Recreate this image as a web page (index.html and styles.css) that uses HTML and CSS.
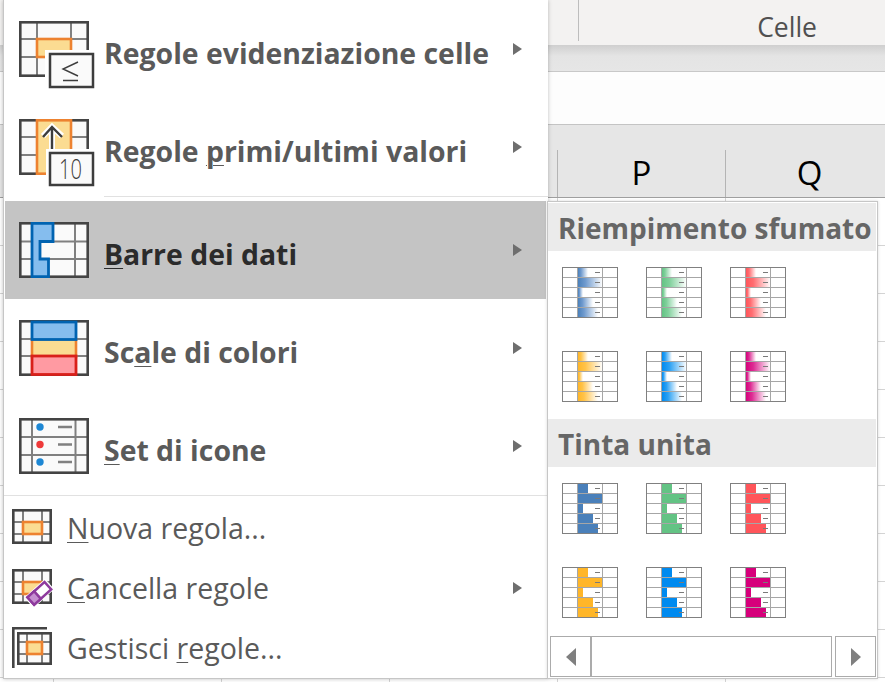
FILE: index.html
```html
<!DOCTYPE html>
<html lang="it">
<head>
<meta charset="utf-8">
<title>Formattazione condizionale</title>
<link rel="stylesheet" href="styles.css">
</head>
<body>
<svg class="defs" width="0" height="0" aria-hidden="true">
  <defs>
    <linearGradient id="g1"><stop offset="0" stop-color="#4a80ba"/><stop offset="0.3" stop-color="#6f9ace"/><stop offset="1" stop-color="#fff"/></linearGradient>
    <linearGradient id="g2"><stop offset="0" stop-color="#63c384"/><stop offset="0.3" stop-color="#7fd09b"/><stop offset="1" stop-color="#fff"/></linearGradient>
    <linearGradient id="g3"><stop offset="0" stop-color="#ff555a"/><stop offset="0.3" stop-color="#ff6d71"/><stop offset="1" stop-color="#fff"/></linearGradient>
    <linearGradient id="g4"><stop offset="0" stop-color="#ffb628"/><stop offset="0.3" stop-color="#ffc349"/><stop offset="1" stop-color="#fff"/></linearGradient>
    <linearGradient id="g5"><stop offset="0" stop-color="#008aef"/><stop offset="0.3" stop-color="#2aa0f3"/><stop offset="1" stop-color="#fff"/></linearGradient>
    <linearGradient id="g6"><stop offset="0" stop-color="#d6007b"/><stop offset="0.3" stop-color="#dc2c93"/><stop offset="1" stop-color="#fff"/></linearGradient>
    <symbol id="bars" viewBox="0 0 56 51">
      <rect x="16" y="1" width="10" height="9"/>
      <rect x="16" y="11" width="24.5" height="9"/>
      <rect x="16" y="21" width="5" height="9"/>
      <rect x="16" y="31" width="15" height="9"/>
      <rect x="16" y="41" width="20" height="9"/>
    </symbol>
    <symbol id="tile-grid" viewBox="0 0 56 51">
      <path d="M15.5 1V50M40.5 1V50M1 10.5H55M1 20.5H55M1 30.5H55M1 40.5H55" stroke="#a6a6a6" fill="none"/>
      <path d="M33 5.5H38M33 15.5H38M33 25.5H38M33 35.5H38M33 45.5H38" stroke="#7a7a7a" fill="none"/>
      <rect x="0.5" y="0.5" width="55" height="50" stroke="#808080" fill="none"/>
    </symbol>
  </defs>
</svg>

<header class="ribbon">
  <div class="ribbon-group"><span class="ribbon-label">Celle</span></div>
</header>
<div class="ribbon-shadow"></div>
<div class="formula-bar"></div>
<div class="col-head">
  <div class="col-spacer"></div>
  <div class="col col-p"><span>P</span></div>
  <div class="col col-q"><span>Q</span></div>
</div>
<div class="sheet"></div>

<nav class="menu">
  <div class="row">
    <svg class="icon" viewBox="0 0 76 68">
      <rect class="cell-bg" x="1" y="1" width="68" height="54"/>
      <path class="line-in" d="M18 1V55M52 1V55M1 18H69M1 36H69"/>
      <rect class="line-out" x="1.300" y="1.300" width="67.400" height="53.400"/>
      <rect class="hl-orange" x="18" y="18" width="34" height="18"/>
      <rect class="halo" x="26" y="29" width="50" height="39"/>
      <rect class="box" x="31" y="33" width="43" height="33"/>
      <path class="glyph" d="M59 41L44 48L59 55M44 59.500H59"/>
    </svg>
    <span class="label">Re<u>g</u>ole evidenziazione celle</span>
    <i class="chev"></i>
  </div>
  <div class="row">
    <svg class="icon" viewBox="0 0 76 68">
      <rect class="cell-bg" x="1" y="1" width="68" height="54"/>
      <path class="line-in" d="M1 18H69M1 36H69"/>
      <rect class="line-out" x="1.300" y="1.300" width="67.400" height="53.400"/>
      <rect class="hl-orange" x="18" y="1.300" width="34" height="53.400"/>
      <path class="arrow-halo" d="M33 9V34M24 17L33 8L43 17"/>
      <path class="arrow" d="M33 8V33M24 18L33 8L43 18"/>
      <rect class="halo" x="27" y="30" width="49" height="38"/>
      <rect class="box" x="31" y="34" width="43" height="32"/>
      <text class="icon-ten" x="40" y="60" textLength="23" lengthAdjust="spacingAndGlyphs">10</text>
    </svg>
    <span class="label">Regole <u>p</u>rimi/ultimi valori</span>
    <i class="chev"></i>
  </div>
  <div class="sep sep-inset"></div>
  <div class="row row-active">
    <svg class="icon" viewBox="0 0 76 68">
      <rect class="cell-bg" x="1" y="1" width="68" height="54"/>
      <path class="line-in" d="M56 1V55M1 19.500H69M1 37H69"/>
      <rect class="line-out" x="1.300" y="1.300" width="67.400" height="53.400"/>
      <path class="hl-blue" d="M13 1.300H34V19.500H21V37H29.500V54.700H13Z"/>
    </svg>
    <span class="label"><u>B</u>arre dei dati</span>
    <i class="chev"></i>
  </div>
  <div class="row">
    <svg class="icon" viewBox="0 0 76 68">
      <rect class="cell-bg" x="1" y="1" width="68" height="54"/>
      <path class="line-in" d="M1 19H69M1 36H69"/>
      <rect class="line-out" x="1.300" y="1.300" width="67.400" height="53.400"/>
      <rect class="hl-orange" x="13" y="19" width="44" height="18"/>
      <rect class="hl-blue" x="13" y="2" width="44" height="17.500"/>
      <rect class="hl-red" x="13" y="36" width="44" height="18.500"/>
    </svg>
    <span class="label">Sc<u>a</u>le di colori</span>
    <i class="chev"></i>
  </div>
  <div class="row">
    <svg class="icon" viewBox="0 0 76 68">
      <rect class="cell-bg" x="1" y="1" width="68" height="54"/>
      <path class="line-in" d="M13 1V55M56.500 1V55M1 19H69M1 37H69"/>
      <rect class="line-out" x="1.300" y="1.300" width="67.400" height="53.400"/>
      <circle class="dot-blue" cx="21" cy="9" r="3.700"/>
      <circle class="dot-red" cx="21" cy="26.500" r="3.700"/>
      <circle class="dot-blue" cx="21" cy="44" r="3.700"/>
      <path class="dash" d="M39 9H53M39 26.500H53M39 44H53"/>
    </svg>
    <span class="label"><u>S</u>et di icone</span>
    <i class="chev"></i>
  </div>
  <div class="sep"></div>
  <div class="row row-small">
    <svg class="icon-small" viewBox="0 0 42 44">
      <rect class="cell-bg" x="1" y="3" width="38" height="33"/>
      <path class="line-in" d="M11 3V36M30 3V36M1 15H39M1 27H39"/>
      <rect class="line-out" x="1.300" y="3.300" width="37.400" height="32.400"/>
      <rect class="hl-orange" x="11" y="15" width="19" height="12"/>
    </svg>
    <span class="label-small"><u>N</u>uova regola...</span>
  </div>
  <div class="row row-small">
    <svg class="icon-small" viewBox="0 0 42 44">
      <rect class="cell-bg" x="1" y="3" width="38" height="33"/>
      <path class="line-in" d="M11 3V36M30 3V36M1 15H39M1 27H39"/>
      <rect class="line-out" x="1.300" y="3.300" width="37.400" height="32.400"/>
      <rect class="hl-orange" x="11" y="15" width="19" height="12"/>
      <g transform="rotate(-42 27 26)">
        <rect class="halo" x="13" y="19.500" width="28" height="14"/>
        <rect class="eraser" x="15.500" y="21.500" width="23" height="10"/>
        <rect class="eraser-tip" x="15.500" y="21.500" width="9" height="10"/>
      </g>
    </svg>
    <span class="label-small"><u>C</u>ancella regole</span>
    <i class="chev"></i>
  </div>
  <div class="row row-small">
    <svg class="icon-small" viewBox="0 0 42 44">
      <path class="line-out" d="M1.300 41V1.300H35"/>
      <rect class="cell-bg" x="6" y="6" width="33" height="31"/>
      <path class="line-in" d="M15 6V37M30 6V37M6 15H39M6 27H39"/>
      <rect class="line-out" x="6.300" y="6.300" width="32.400" height="30.400"/>
      <rect class="hl-orange" x="15" y="15" width="15" height="12"/>
    </svg>
    <span class="label-small">Gestisci <u>r</u>egole...</span>
  </div>
</nav>

<aside class="submenu">
  <div class="sub-head">Riempimento sfumato</div>
  <div class="tiles">
    <svg class="tile" viewBox="0 0 56 51"><use href="#bars" fill="url(#g1)"/><use href="#tile-grid"/></svg>
    <svg class="tile" viewBox="0 0 56 51"><use href="#bars" fill="url(#g2)"/><use href="#tile-grid"/></svg>
    <svg class="tile" viewBox="0 0 56 51"><use href="#bars" fill="url(#g3)"/><use href="#tile-grid"/></svg>
    <svg class="tile" viewBox="0 0 56 51"><use href="#bars" fill="url(#g4)"/><use href="#tile-grid"/></svg>
    <svg class="tile" viewBox="0 0 56 51"><use href="#bars" fill="url(#g5)"/><use href="#tile-grid"/></svg>
    <svg class="tile" viewBox="0 0 56 51"><use href="#bars" fill="url(#g6)"/><use href="#tile-grid"/></svg>
  </div>
  <div class="sub-head">Tinta unita</div>
  <div class="tiles">
    <svg class="tile" viewBox="0 0 56 51"><use href="#bars" fill="#4a80ba"/><use href="#tile-grid"/></svg>
    <svg class="tile" viewBox="0 0 56 51"><use href="#bars" fill="#63c384"/><use href="#tile-grid"/></svg>
    <svg class="tile" viewBox="0 0 56 51"><use href="#bars" fill="#ff555a"/><use href="#tile-grid"/></svg>
    <svg class="tile" viewBox="0 0 56 51"><use href="#bars" fill="#ffb628"/><use href="#tile-grid"/></svg>
    <svg class="tile" viewBox="0 0 56 51"><use href="#bars" fill="#008aef"/><use href="#tile-grid"/></svg>
    <svg class="tile" viewBox="0 0 56 51"><use href="#bars" fill="#d6007b"/><use href="#tile-grid"/></svg>
  </div>
  <div class="scroller">
    <div class="scroll-btn scroll-left"><i class="tri-left"></i></div>
    <div class="scroll-track"></div>
    <div class="scroll-btn scroll-right"><i class="tri-right"></i></div>
  </div>
</aside>
</body>
</html>
```

FILE: styles.css
```css
* { box-sizing: border-box; }

html, body { margin: 0; height: 100%; }

body {
  width: 885px;
  height: 682px;
  overflow: hidden;
  position: relative;
  display: flex;
  flex-direction: column;
  background: #fff;
  font-family: "Open Sans", "Noto Sans", sans-serif;
}

.defs { position: absolute; }

/* Spreadsheet behind the menu */
.ribbon {
  height: 45px;
  flex: none;
  background: #f3f2f1;
  padding-left: 578px;
}

.ribbon-group {
  height: 41px;
  border-left: 1px solid #bdbdbd;
  display: flex;
  justify-content: flex-end;
  padding-right: 68px;
  align-items: flex-end;
}

.ribbon-label {
  font-size: 26.500px;
  line-height: 30px;
  color: #505050;
  transform: translateY(1px);
}

.ribbon-shadow {
  height: 27px;
  flex: none;
  background: linear-gradient(#cfcfcf, #e4e4e4 11px, #e6e6e6);
  border-bottom: 1px solid #c8c8c8;
}

.formula-bar {
  height: 53px;
  flex: none;
  background: #fdfdfd;
  border-bottom: 1px solid #c4c4c4;
}

.col-head {
  height: 73px;
  flex: none;
  display: flex;
  align-items: flex-end;
  background: #e6e6e6;
  border-bottom: 1px solid #9f9f9f;
}

.col-spacer { flex: 1; }

.col {
  height: 47px;
  border-left: 1px solid #b4b4b4;
  display: flex;
  justify-content: center;
  font-size: 33px;
  line-height: 46px;
  color: #000;
}

.col-p { width: 168px; }
.col-q { width: 160px; padding-left: 8px; }

.sheet {
  flex: 1;
  background-color: #fff;
  background-image:
    linear-gradient(90deg, #d4d4d4 1px, transparent 1px),
    linear-gradient(#d4d4d4 1px, transparent 1px);
  background-size: 168px 100%, 100% 48px;
  background-position: 53px 0, 0 47px;
}

/* Main dropdown menu */
.menu {
  position: absolute;
  left: 3px;
  top: 0;
  width: 545px;
  height: 679px;
  background: #fff;
  border-left: 1px solid #c6c6c6;
  border-bottom: 1px solid #c6c6c6;
  box-shadow: 0 0 4px rgba(0, 0, 0, 0.25);
  display: flex;
  flex-direction: column;
}

.row {
  height: 98px;
  flex: none;
  display: flex;
  align-items: flex-start;
  padding: 21px 0 0 15px;
  position: relative;
}

.row-active {
  background: #c4c4c4;
  margin: 0 2px 0 1px;
  padding-left: 14px;
}

.row-small {
  height: 60px;
  padding: 9px 0 0 8px;
}

.icon {
  width: 76px;
  height: 68px;
  flex: none;
  display: block;
}

.icon-small {
  width: 42px;
  height: 44px;
  flex: none;
  display: block;
}

/* Icon parts */
.cell-bg { fill: #fafafa; }
.line-in { fill: none; stroke: #808080; stroke-width: 2; }
.line-out { fill: none; stroke: #444; stroke-width: 2.600; }
.hl-orange { fill: #fbdc92; stroke: #ed8230; stroke-width: 2.600; }
.hl-blue { fill: #85bdee; stroke: #0063b1; stroke-width: 2.800; }
.hl-red { fill: #ff9aa2; stroke: #d9201a; stroke-width: 2.800; }
.halo { fill: #fff; }
.box { fill: #fafafa; stroke: #3d3d3d; stroke-width: 2.500; }
.glyph { fill: none; stroke: #3d3d3d; stroke-width: 1.400; }
.arrow-halo { fill: none; stroke: #fff; stroke-width: 6; }
.arrow { fill: none; stroke: #3d3d3d; stroke-width: 2.400; }
.dot-blue { fill: #1d87d4; }
.dot-red { fill: #ee3a3a; }
.dash { fill: none; stroke: #808080; stroke-width: 2.500; }
.eraser { fill: #fff; stroke: #8e3a9d; stroke-width: 2.500; }
.eraser-tip { fill: #c58fd0; stroke: #8e3a9d; stroke-width: 2.500; }

.icon-ten {
  font-family: "Open Sans", sans-serif;
  font-size: 27px;
  font-weight: 300;
  fill: #3d3d3d;
}

.label {
  margin-left: 9px;
  font-size: 28.400px;
  font-weight: 700;
  line-height: 64px;
  color: #5a5a5a;
  white-space: nowrap;
}

.row-active .label { color: #2b2b2b; }

.label-small {
  margin-left: 13px;
  font-size: 28.500px;
  line-height: 42px;
  color: #5a5a5a;
  white-space: nowrap;
}

.label u,
.label-small u {
  text-decoration-thickness: 1px;
  text-underline-offset: 3px;
}

.chev {
  position: absolute;
  left: 509px;
  top: 43px;
  width: 0;
  height: 0;
  border-left: 9px solid #6e6e6e;
  border-top: 6px solid transparent;
  border-bottom: 6px solid transparent;
}

.row-active .chev { left: 508px; }
.row-small .chev { top: 24px; }

.sep {
  height: 3px;
  flex: none;
  border-top: 1px solid #e1e1e1;
}

.sep-inset {
  height: 5px;
  margin-left: 100px;
}

/* Data bar gallery */
.submenu {
  position: absolute;
  left: 547px;
  top: 201px;
  width: 331px;
  height: 478px;
  background: #fff;
  border: 1px solid #c6c6c6;
  padding-top: 1px;
  box-shadow: 0 0 3px rgba(0, 0, 0, 0.15);
}

.sub-head {
  height: 48px;
  width: 328px;
  background: #ebebeb;
  padding-left: 10px;
  font-size: 28px;
  font-weight: 700;
  line-height: 50px;
  color: #666;
  white-space: nowrap;
}

.tiles {
  display: grid;
  grid-template-columns: repeat(3, 84px);
  row-gap: 33px;
  padding: 16px 0 17px 14px;
}

.tile {
  width: 56px;
  height: 51px;
  display: block;
}

.scroller {
  display: flex;
  margin: 1px 0 0 2px;
  height: 41px;
  width: 326px;
}

.scroll-btn {
  width: 41px;
  height: 41px;
  border: 1px solid #ababab;
  display: flex;
  align-items: center;
  justify-content: center;
  flex: none;
}

.scroll-left { width: 42px; border-right-width: 2px; }

.scroll-track {
  width: 240px;
  border: 1px solid #ababab;
  border-left: 0;
  flex: none;
  margin-right: 3px;
}

.tri-left,
.tri-right {
  width: 0;
  height: 0;
  border-top: 9px solid transparent;
  border-bottom: 9px solid transparent;
}

.tri-left { border-right: 10px solid #7f7f7f; }
.tri-right { border-left: 10px solid #7f7f7f; }
```
